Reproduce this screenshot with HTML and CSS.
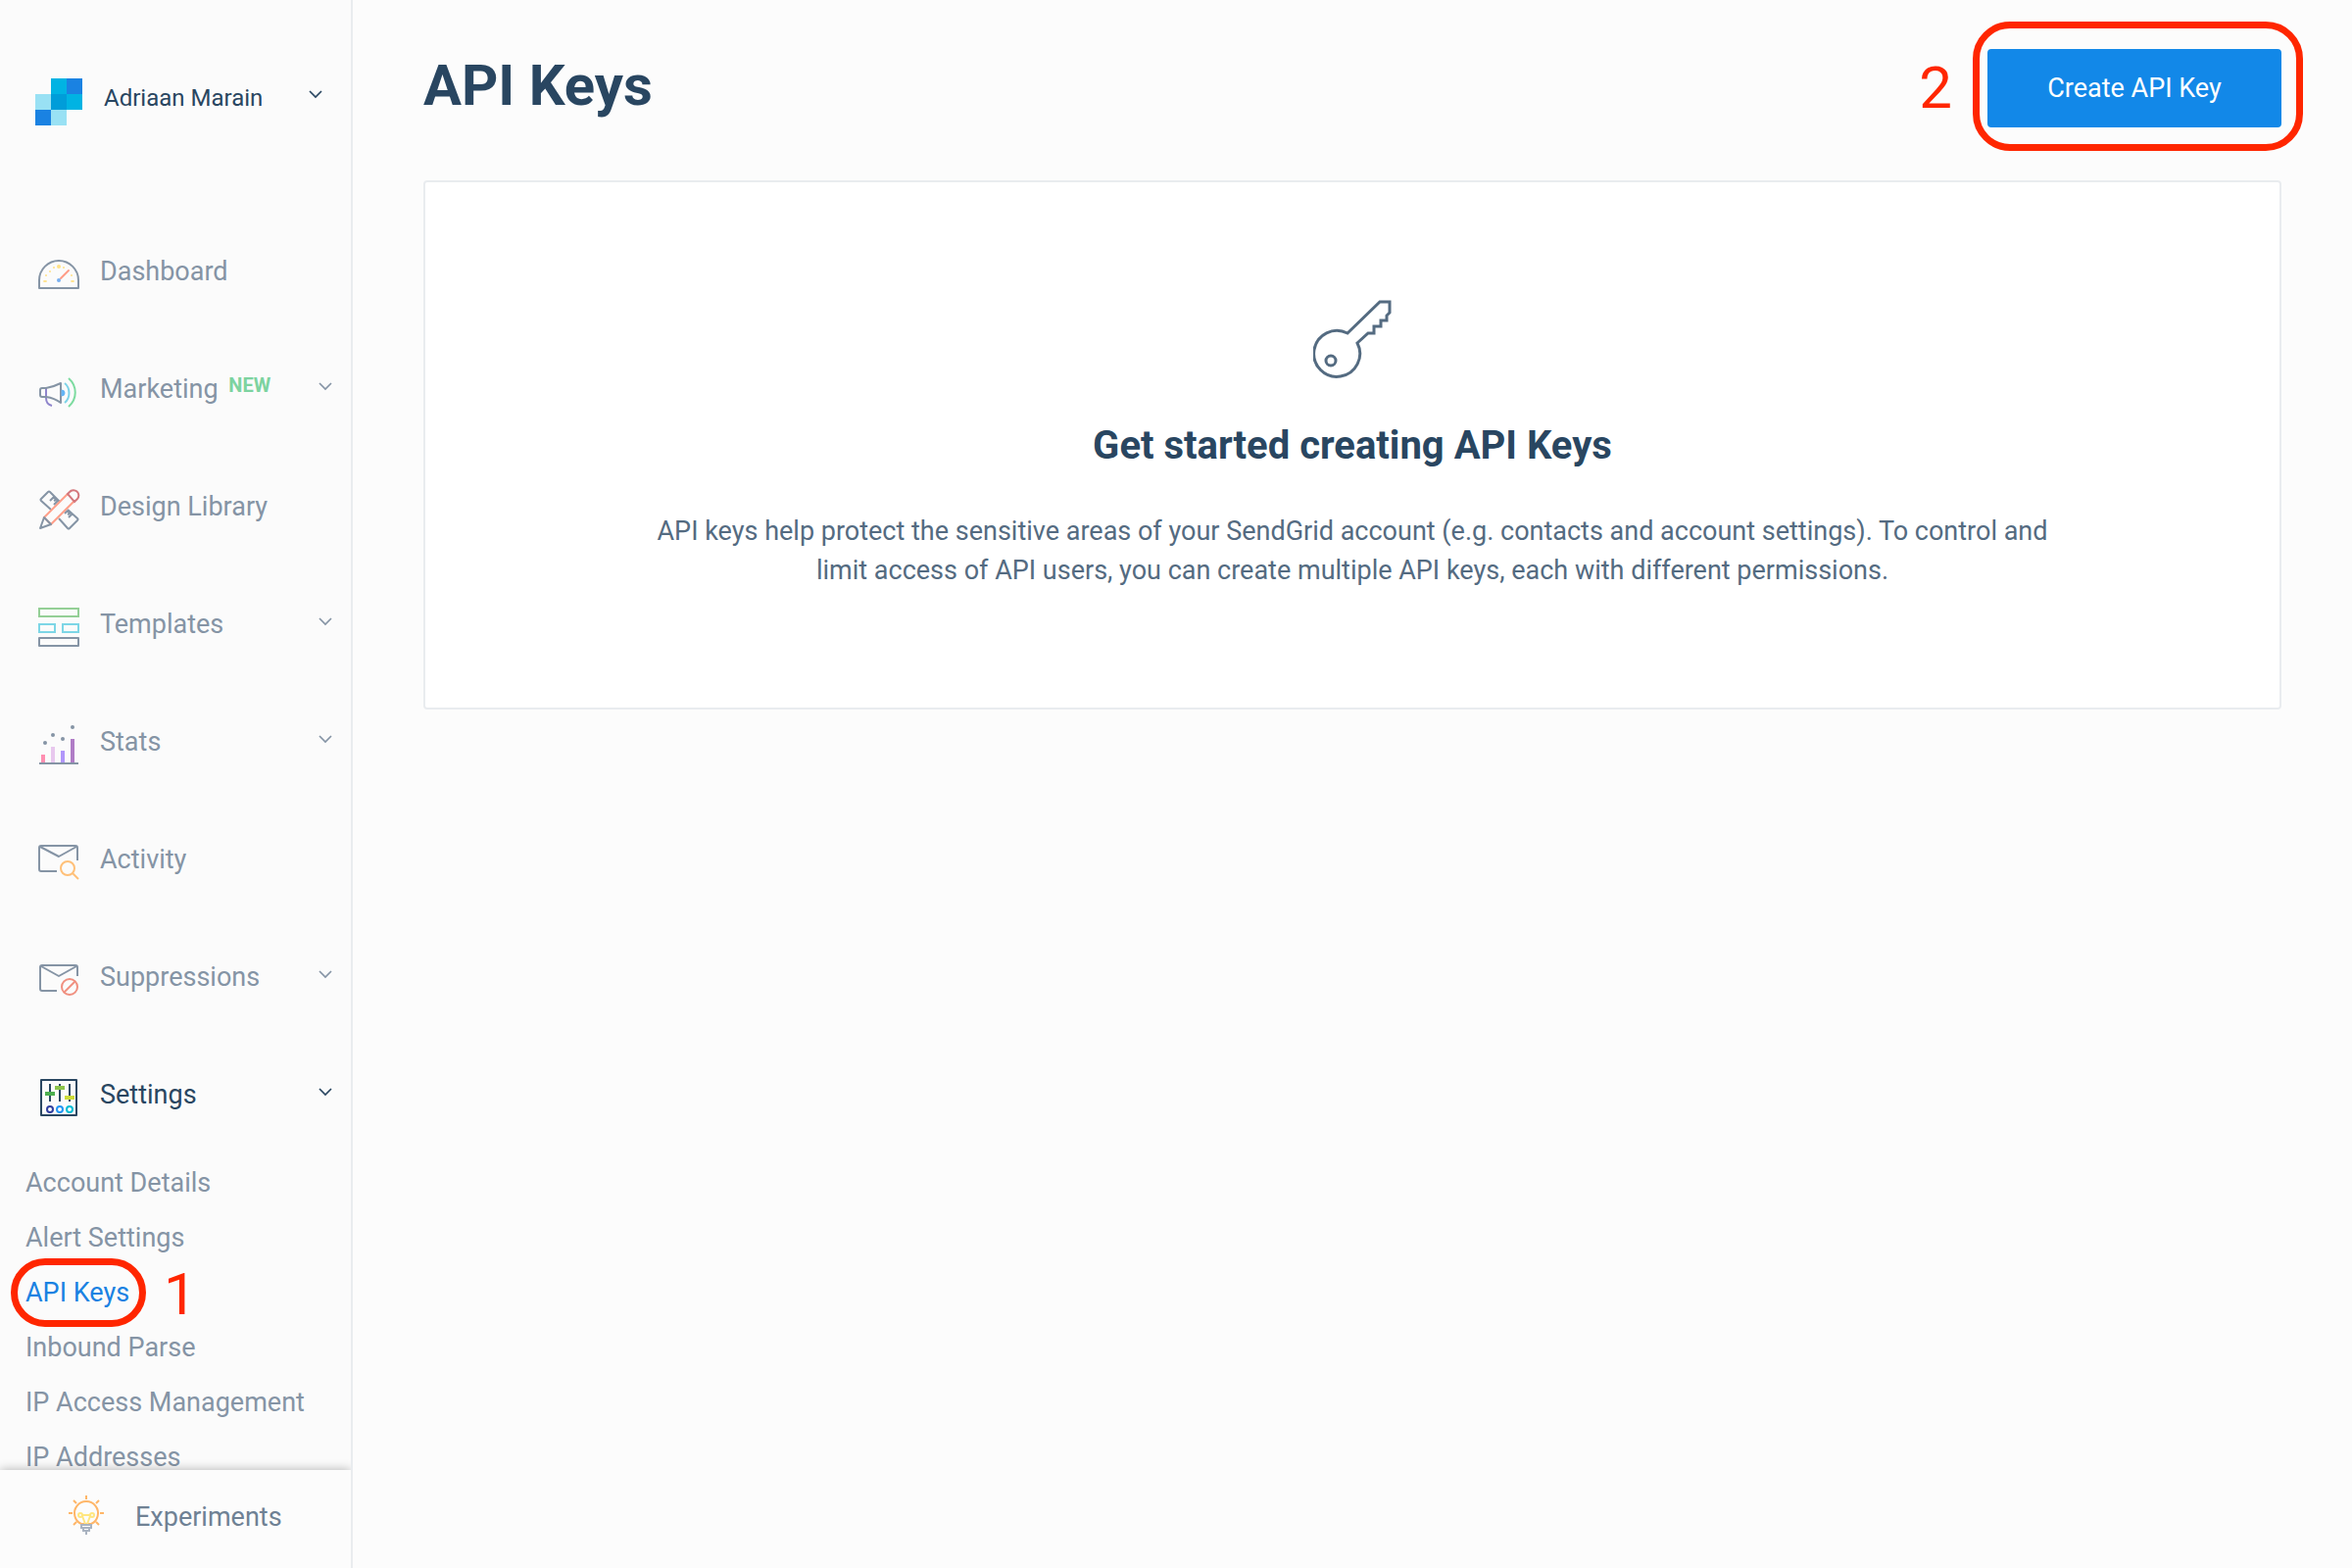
FILE: index.html
```html
<!DOCTYPE html>
<html lang="en">
<head>
<meta charset="utf-8">
<meta name="viewport" content="width=device-width, initial-scale=1">
<title>API Keys</title>
<link rel="stylesheet" href="styles.css">
</head>
<body>
<div class="app">
  <aside class="sidebar">
    <button class="account" type="button">
      <svg class="icon" viewBox="0 0 48 48" aria-hidden="true">
        <path fill="#00b3e3" d="M16 0h16v16H16zM32 16h16v16H32z"/>
        <path fill="#1a82e2" d="M32 0h16v16H32zM0 32h16v16H0z"/>
        <path fill="#99e1f4" d="M0 16h16v16H0zM16 32h16v16H16z"/>
        <path fill="#009dd9" d="M16 16h16v16H16z"/>
      </svg>
      <span class="account-name">Adriaan Marain</span>
      <svg class="chevron" viewBox="0 0 16 12" aria-hidden="true"><path d="M2 3l6 6 6-6"/></svg>
    </button>

    <nav class="nav" aria-label="Main">
      <a class="nav-item" href="#dashboard">
        <svg class="icon" viewBox="0 0 48 48" aria-hidden="true">
          <path class="line" d="M4 38V30a20 20 0 0 1 40 0v8z"/>
          <g fill="#ffe187"><ellipse cx="10" cy="31" rx="2" ry="1"/><ellipse cx="38" cy="31" rx="2" ry="1"/><circle cx="11" cy="25" r="1"/><circle cx="37" cy="25" r="1"/><circle cx="15" cy="21" r="1"/><circle cx="19" cy="17" r="1"/><circle cx="29" cy="17" r="1"/><circle cx="24" cy="16" r="2"/></g>
          <path d="M26 28l8-8" stroke="#ff9c86" stroke-width="2" stroke-linecap="round"/>
          <circle cx="24" cy="30" r="2" fill="#78aff0"/>
        </svg>
        <span class="nav-label">Dashboard</span>
      </a>
      <a class="nav-item" href="#marketing">
        <svg class="icon" viewBox="0 0 48 48" aria-hidden="true">
          <path d="M11 20v10c0 4 2 7 6 8" fill="none" stroke="#8f85cc" stroke-width="2"/>
          <path class="line" d="M7 20h4c7-1 11-3 15-5v20c-4-3-8-5-15-6H7q-2 0-2-2v-5q0-2 2-2z"/>
          <path d="M27 22a3 3 0 0 1 0 6z" fill="#64b5f6" stroke="#64b5f6"/>
          <path d="M30 15c6 5 6 15 0 20" fill="none" stroke="#7dd3e8" stroke-width="2"/>
          <path d="M34 10c9 8 9 21 0 29" fill="none" stroke="#7ddba0" stroke-width="2"/>
        </svg>
        <span class="nav-label">Marketing <span class="tag">NEW</span></span>
        <svg class="chevron" viewBox="0 0 16 12" aria-hidden="true"><path d="M2 3l6 6 6-6"/></svg>
      </a>
      <a class="nav-item" href="#design">
        <svg class="icon" viewBox="0 0 48 48" aria-hidden="true">
          <path class="line" d="M16 24L6 15q-1-1 0-2l7-7q1-1 2 0l10 10M33 24l10 9q1 1 0 2l-8 8q-1 1-2 0L24 33M15 15l4-4 2 3-2 1M19 19l4-4M30 28l3-3 2 3-2 1M34 32l4-4"/>
          <path d="M33 8L9 32l7 7 24-24" fill="none" stroke="#ff9f89" stroke-width="2"/>
          <path d="M33 8l2-2a5 5 0 0 1 8 7l-3 3z" fill="none" stroke="#d4777c" stroke-width="2"/>
          <path class="line" d="M9 32l7 7-11 4z"/>
        </svg>
        <span class="nav-label">Design Library</span>
      </a>
      <a class="nav-item" href="#templates">
        <svg class="icon" viewBox="0 0 48 48" aria-hidden="true">
          <path d="M4 5h40v8H4z" fill="none" stroke="#94cf96" stroke-width="2"/>
          <path d="M4 21h16v8H4zM28 21h16v8H28z" fill="none" stroke="#7dd6e6" stroke-width="2"/>
          <path class="line" d="M4 35h40v8H4z"/>
        </svg>
        <span class="nav-label">Templates</span>
        <svg class="chevron" viewBox="0 0 16 12" aria-hidden="true"><path d="M2 3l6 6 6-6"/></svg>
      </a>
      <a class="nav-item" href="#stats">
        <svg class="icon" viewBox="0 0 48 48" aria-hidden="true">
          <path fill="#ff8fb1" d="M6 34h4v8H6z"/><path fill="#e8c8ee" d="M16 26h4v16h-4z"/>
          <path fill="#b196fa" d="M26 30h4v12h-4z"/><path fill="#b07cc6" d="M36 18h4v24h-4z"/>
          <path class="line" d="M4 43h40"/>
          <g fill="currentColor"><circle cx="10" cy="22" r="2"/><circle cx="18" cy="14" r="2"/><circle cx="28" cy="18" r="2"/><circle cx="38" cy="6" r="2"/></g>
        </svg>
        <span class="nav-label">Stats</span>
        <svg class="chevron" viewBox="0 0 16 12" aria-hidden="true"><path d="M2 3l6 6 6-6"/></svg>
      </a>
      <a class="nav-item" href="#activity">
        <svg class="icon" viewBox="0 0 48 48" aria-hidden="true">
          <path class="line" d="M22 33H6q-2 0-2-2V9q0-2 2-2h35q2 0 2 2v13M5 8l19 10L42 8"/>
          <circle cx="33" cy="30" r="7" fill="none" stroke="#ffc078" stroke-width="2"/>
          <path d="M38 35l6 6" stroke="#ffc078" stroke-width="2"/>
        </svg>
        <span class="nav-label">Activity</span>
      </a>
      <a class="nav-item" href="#suppressions">
        <svg class="icon" viewBox="0 0 48 48" aria-hidden="true">
          <path class="line" d="M22 35H7q-2 0-2-2V11q0-2 2-2h34q2 0 2 2v9M6 10l18 10 18-10"/>
          <circle cx="35" cy="31" r="8" fill="none" stroke="#f09080" stroke-width="2"/>
          <path d="M29 37l12-12" stroke="#f09080" stroke-width="2"/>
        </svg>
        <span class="nav-label">Suppressions</span>
        <svg class="chevron" viewBox="0 0 16 12" aria-hidden="true"><path d="M2 3l6 6 6-6"/></svg>
      </a>
      <a class="nav-item is-open" href="#settings" aria-expanded="true">
        <svg class="icon" viewBox="0 0 48 48" aria-hidden="true">
          <path class="line" d="M6 6h36v36H6zM15 10v18M25 10v18M35 10v18"/>
          <path fill="#4caf50" d="M10 18h10v4H10z"/><path fill="#8bc34a" d="M20 12h10v4H20z"/><path fill="#cddc39" d="M30 22h10v4H30z"/>
          <g fill="none" stroke-width="2"><circle cx="15" cy="36" r="3" stroke="#303f9f"/><circle cx="25" cy="36" r="3" stroke="#2196f3"/><circle cx="35" cy="36" r="3" stroke="#00bcd4"/></g>
        </svg>
        <span class="nav-label">Settings</span>
        <svg class="chevron" viewBox="0 0 16 12" aria-hidden="true"><path d="M2 3l6 6 6-6"/></svg>
      </a>
      <ul class="subnav">
        <li><a href="#account">Account Details</a></li>
        <li><a href="#alerts">Alert Settings</a></li>
        <li class="marked"><a class="is-current" href="#keys" aria-current="page">API Keys</a><span class="ring ring-nav"></span><span class="step step-nav">1</span></li>
        <li><a href="#inbound">Inbound Parse</a></li>
        <li><a href="#access">IP Access Management</a></li>
        <li><a href="#addresses">IP Addresses</a></li>
      </ul>
    </nav>

    <a class="experiments" href="#experiments">
      <svg class="icon" viewBox="0 0 48 48" aria-hidden="true">
        <g fill="none" stroke-width="2">
          <path stroke="#ffb668" d="M19 33a12 12 0 1 1 10 0zM24 4v4M6 22h4M38 22h4M11 9l3 3M37 9l-3 3M11 34l3-3M37 34l-3-3"/>
          <path stroke="#ffe680" d="M23 33l-3-8M25 33l3-8M20 24h8"/>
          <circle cx="18" cy="24" r="2" stroke="#ffe680"/><circle cx="30" cy="24" r="2" stroke="#ffe680"/>
          <path stroke="#a9b3c0" d="M18 34h12M19 34v3h10v-3M21 37v3h6v-3M24 40v4"/>
        </g>
      </svg>
      <span class="experiments-label">Experiments</span>
    </a>
  </aside>

  <main class="main">
    <header class="page-header">
      <h1>API Keys</h1>
      <div class="marked">
        <span class="step step-action">2</span><span class="ring ring-action"></span>
        <button class="primary" type="button">Create API Key</button>
      </div>
    </header>
    <section class="empty">
      <svg class="key" viewBox="0 0 80 82" aria-hidden="true">
        <path d="M35 34L68 2h10v11l-3 3v5h-6v6h-7v7h-6L45 44A23.500 23.500 0 1 1 35 34z"/>
        <circle cx="18" cy="62" r="5"/>
      </svg>
      <h2>Get started creating API Keys</h2>
      <p>API keys help protect the sensitive areas of your SendGrid account (e.g. contacts and account settings). To control and limit access of API users, you can create multiple API keys, each with different permissions.</p>
    </section>
  </main>
</div>
</body>
</html>
```
FILE: styles.css
```css
* { box-sizing: border-box; }

body {
  margin: 0;
  background: #fcfcfc;
  color: #546b81;
  font-family: Roboto, "Liberation Sans", sans-serif;
  font-size: 27px;
  line-height: 40px;
}

a { color: inherit; text-decoration: none; }
button { border: 0; font: inherit; cursor: pointer; }

.app { display: flex; height: 100vh; }

/* Sidebar */
.sidebar {
  display: flex;
  flex-direction: column;
  flex: 0 0 360px;
  border-right: 2px solid #e9ecef;
  background: #fbfbfb;
}

.account {
  display: flex;
  align-items: flex-start;
  height: 220px;
  flex: none;
  padding: 80px 28px 0 36px;
  background: none;
  color: #294661;
  text-align: left;
}

.account-name { flex: 1; margin-left: 22px; font-size: 24px; }
.account .chevron { margin: 10px 0; }

.icon { flex: none; width: 48px; height: 48px; }
.line { fill: none; stroke: currentColor; stroke-width: 2; stroke-linejoin: round; }
.chevron { flex: none; width: 16px; height: 12px; }
.chevron path { fill: none; stroke: currentColor; stroke-width: 1.7; }

.nav { flex: 1; min-height: 0; overflow: hidden; color: #8594a5; }

.nav-item { display: flex; align-items: center; height: 120px; padding: 0 18px 0 36px; }
.nav-label { flex: 1; margin-left: 18px; padding-bottom: 6px; }
.nav-item .chevron { margin-bottom: 12px; }
.is-open { color: #294661; }

.tag {
  margin-left: 4px;
  color: #7dd3a0;
  font-size: 20px;
  font-weight: 700;
  vertical-align: 6px;
  line-height: 20px;
}

.subnav { margin: -1px 0 0; padding: 0 26px; list-style: none; line-height: 56px; }
.is-current { color: #1a82e2; }

.experiments {
  display: flex;
  align-items: center;
  gap: 26px;
  flex: none;
  height: 100px;
  padding: 0 64px 8px;
  background: #fcfcfc;
  box-shadow: 0 0 10px rgba(0, 0, 0, 0.3);
  clip-path: inset(-12px 0 0 0);
  color: #6f8194;
}

.experiments-label { padding-top: 4px; }

/* Page */
.main { flex: 1; min-width: 0; padding: 50px 72px; }

.page-header { display: flex; justify-content: space-between; align-items: flex-start; margin-bottom: 54px; }

h1, h2 { margin: 0; color: #294661; font-weight: 700; }
h1 { font-size: 58px; line-height: 74px; }
h2 { margin: 40px 0; font-size: 40px; line-height: 54px; }

.primary {
  display: block;
  width: 300px;
  height: 80px;
  border-radius: 4px;
  background: #1288e8;
  color: #fff;
}

.empty {
  padding: 120px 40px;
  border: 2px solid #e9ecef;
  border-radius: 4px;
  background: #fff;
  text-align: center;
}

.empty p { max-width: 1440px; margin: 0 auto; }

.key { display: block; width: 80px; height: 82px; margin: 0 auto; fill: none; stroke: #546b81; stroke-width: 3; }

/* Walkthrough marks laid over the page */
.marked { position: relative; }
.ring { position: absolute; border: 7px solid #ff2600; pointer-events: none; }
.ring-nav { left: -15px; top: -7px; width: 138px; height: 70px; border-radius: 35px; }
.ring-action { inset: -28px -22px -24px -15px; border-radius: 38px; }
.step {
  position: absolute;
  color: #ff2600;
  font-size: 60px;
  line-height: 60px;
}
.step-nav { left: 141px; top: 0; }
.step-action { right: 336px; top: 10px; }
```
